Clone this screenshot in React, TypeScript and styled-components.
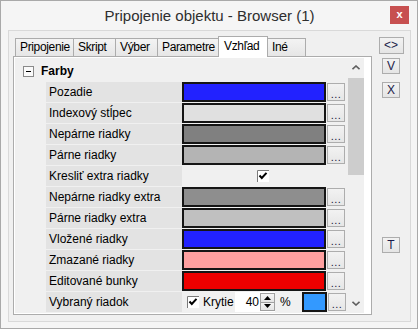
import styled, { createGlobalStyle } from 'styled-components'

const GlobalStyle = createGlobalStyle`
  html, body { margin: 0; padding: 0; background: #ffffff; }
  body {
    font-family: "Liberation Sans", Arial, sans-serif;
    font-size: 12px;
    color: #000;
  }
  * { box-sizing: border-box; }
`

type ColorRow = { name: string; color: string }

const topRows: ColorRow[] = [
  { name: 'Pozadie', color: '#2222ff' },
  { name: 'Indexový stĺpec', color: '#e0e0e0' },
  { name: 'Nepárne riadky', color: '#808080' },
  { name: 'Párne riadky', color: '#b4b4b4' },
]

const bottomRows: ColorRow[] = [
  { name: 'Nepárne riadky extra', color: '#8e8e8e' },
  { name: 'Párne riadky extra', color: '#c0c0c0' },
  { name: 'Vložené riadky', color: '#2222ff' },
  { name: 'Zmazané riadky', color: '#ffa0a0' },
  { name: 'Editované bunky', color: '#ee0000' },
]

const tabs = [
  { label: 'Pripojenie', width: 59 },
  { label: 'Skript', width: 43 },
  { label: 'Výber', width: 43 },
  { label: 'Parametre', width: 62 },
  { label: 'Vzhľad', width: 50, active: true },
  { label: 'Iné', width: 39 },
]

function Check() {
  return (
    <CheckBox>
      <svg width="12" height="12" viewBox="0 0 12 12">
        <rect x="0" y="0" width="12" height="12" fill="#fff" />
        <path d="M0.5 12 V0.5 H12" stroke="#7a7a7a" fill="none" />
        <path d="M2.5 5.5 L4.8 8 L9.5 2.8" stroke="#000" strokeWidth="2" fill="none" />
      </svg>
    </CheckBox>
  )
}

function Chevron({ down }: { down?: boolean }) {
  return (
    <svg width="8" height="5" viewBox="0 0 8 5">
      <path
        d={down ? 'M0.5 0.8 L4 4 L7.5 0.8' : 'M0.5 4.2 L4 1 L7.5 4.2'}
        stroke="#5f5f5f"
        strokeWidth="1.6"
        fill="none"
      />
    </svg>
  )
}

function DotsButton() {
  return <Dots>...</Dots>
}

export default function App() {
  return (
    <>
      <GlobalStyle />
      <Window>
        <TitleBar>
          <span />
          <Title>Pripojenie objektu - Browser (1)</Title>
          <Close>x</Close>
        </TitleBar>
        <Client>
          <TabArea>
            <TabStrip>
              {tabs.map((t) => (
                <Tab key={t.label} $width={t.width} $active={!!t.active}>
                  {t.label}
                </Tab>
              ))}
            </TabStrip>
            <Panel>
              <Grid>
                <GridBody>
                  <Header>
                    <Minus />
                    Farby
                  </Header>
                  {topRows.map((r) => (
                    <Row key={r.name}>
                      <Name>{r.name}</Name>
                      <Value>
                        <Swatch $color={r.color} />
                        <DotsButton />
                      </Value>
                    </Row>
                  ))}
                  <Row>
                    <Name>Kresliť extra riadky</Name>
                    <CenterValue>
                      <Check />
                    </CenterValue>
                  </Row>
                  {bottomRows.map((r) => (
                    <Row key={r.name}>
                      <Name>{r.name}</Name>
                      <Value>
                        <Swatch $color={r.color} />
                        <DotsButton />
                      </Value>
                    </Row>
                  ))}
                  <Row>
                    <Name>Vybraný riadok</Name>
                    <Value>
                      <Cover>
                        <Check />
                        <span>Krytie</span>
                      </Cover>
                      <SpinEdit>40</SpinEdit>
                      <Spinner>
                        <SpinHalf>
                          <svg width="7" height="4" viewBox="0 0 7 4"><path d="M0 4 L3.5 0 L7 4 Z" fill="#000" /></svg>
                        </SpinHalf>
                        <SpinHalf>
                          <svg width="7" height="4" viewBox="0 0 7 4"><path d="M0 0 L3.5 4 L7 0 Z" fill="#000" /></svg>
                        </SpinHalf>
                      </Spinner>
                      <Percent>%</Percent>
                      <Swatch $color="#3399ff" $width={25} />
                      <DotsButton />
                    </Value>
                  </Row>
                </GridBody>
                <ScrollBar>
                  <ScrollArrow>
                    <Chevron />
                  </ScrollArrow>
                  <Thumb />
                  <ScrollTrack />
                  <ScrollArrow>
                    <Chevron down />
                  </ScrollArrow>
                </ScrollBar>
              </Grid>
            </Panel>
          </TabArea>
          <SideButtons>
            <SideButton $w={25} $h={17}>&lt;&gt;</SideButton>
            <SideButton $mt={4}>V</SideButton>
            <SideButton $mt={8}>X</SideButton>
            <SideButton $mt={139}>T</SideButton>
          </SideButtons>
        </Client>
      </Window>
    </>
  )
}

const Window = styled.div`
  width: 418px;
  height: 329px;
  display: flex;
  flex-direction: column;
  background: #f5f5f5;
  border: 1px solid #a9a9a9;
  padding: 0 6px 6px 7px;
`
const TitleBar = styled.div`
  height: 29px;
  display: grid;
  grid-template-columns: 1fr auto 1fr;
  align-items: center;
`
const Title = styled.div`
  font-family: "Liberation Sans", Arial, sans-serif;
  font-size: 15px;
  color: #2e2e2e;
  padding-bottom: 1px;
`
const Close = styled.div`
  justify-self: end;
  align-self: start;
  margin-top: 5px;
  margin-right: 2px;
  width: 19px;
  height: 18px;
  background: #c75050;
  color: #fff;
  font-weight: bold;
  font-size: 11px;
  line-height: 17px;
  text-align: center;
`
const Client = styled.div`
  flex: 1;
  display: flex;
  background: #f0f0f0;
  border: 1px solid #d9d9d9;
`
const TabArea = styled.div`
  width: 363px;
  display: flex;
  flex-direction: column;
  padding: 5px 0 6px 4px;
`
const TabStrip = styled.div`
  height: 21px;
  display: flex;
  align-items: flex-start;
  padding-left: 2px;
  margin-bottom: -1px;
  position: relative;
  z-index: 1;
`
const Tab = styled.div<{ $width: number; $active: boolean }>`
  width: ${(p) => p.$width}px;
  height: ${(p) => (p.$active ? 21 : 18)}px;
  margin-top: ${(p) => (p.$active ? 0 : 2)}px;
  margin-left: -1px;
  &:first-child { margin-left: 0; }
  padding: ${(p) => (p.$active ? '2px 0 0 5px' : '1px 0 0 4px')};
  border: 1px solid #acacac;
  border-bottom: none;
  background: ${(p) => (p.$active ? '#ffffff' : 'linear-gradient(#f3f3f3, #e6e6e6)')};
  position: relative;
  z-index: ${(p) => (p.$active ? 2 : 0)};
  font-size: 12px;
  letter-spacing: -0.35px;
  line-height: 15px;
  white-space: nowrap;
  overflow: hidden;
  color: #000;
`
const Panel = styled.div`
  flex: 1;
  background: #ffffff;
  border: 1px solid #acacac;
  padding: 1px 7px 1px 1px;
  display: flex;
`
const Grid = styled.div`
  flex: 1;
  display: flex;
  background: #f0f0f0;
`
const GridBody = styled.div`
  flex: 1;
  display: flex;
  flex-direction: column;
  gap: 1px;
`
const Header = styled.div`
  height: 23px;
  display: flex;
  align-items: center;
  padding: 3px 0 0 8px;
  font-weight: bold;
  font-size: 12px;
`
const Minus = styled.span`
  width: 11px;
  height: 11px;
  margin-right: 7px;
  border: 1px solid #8a8a8a;
  background: #fafafa;
  position: relative;
  &::after {
    content: '';
    position: absolute;
    left: 2px;
    top: 4px;
    width: 5px;
    height: 1px;
    background: #000;
  }
`
const Row = styled.div`
  height: 20px;
  margin-left: 31px;
  display: grid;
  grid-template-columns: 136px 1fr;
`
const Name = styled.div`
  background: #e3e3e3;
  padding-left: 3px;
  line-height: 20px;
  white-space: nowrap;
`
const Value = styled.div`
  display: flex;
  align-items: stretch;
`
const CenterValue = styled.div`
  display: flex;
  align-items: center;
  justify-content: center;
  padding-right: 2px;
`
const Swatch = styled.div<{ $color: string; $width?: number }>`
  width: ${(p) => p.$width ?? 144}px;
  height: 20px;
  background: ${(p) => p.$color};
  border: 2px solid #151515;
`
const Dots = styled.div`
  width: 18px;
  height: 18px;
  margin: 1px 0 0 1px;
  border: 1px solid #adadad;
  background: linear-gradient(#f2f2f2, #e6e6e6);
  font-size: 11px;
  line-height: 8px;
  text-align: center;
  color: #202040;
  display: flex;
  align-items: flex-end;
  justify-content: center;
  padding-bottom: 2px;
  letter-spacing: 0.5px;
`
const CheckBox = styled.span`
  width: 12px;
  height: 12px;
  display: inline-flex;
`
const Cover = styled.div`
  width: 53px;
  display: flex;
  align-items: center;
  gap: 4px;
  padding-left: 5px;
  white-space: nowrap;
  font-size: 12px;
`
const SpinEdit = styled.div`
  width: 25px;
  background: #ffffff;
  text-align: right;
  line-height: 20px;
  padding-right: 1px;
`
const Spinner = styled.div`
  width: 15px;
  display: flex;
  flex-direction: column;
  background: #ffffff;
  padding: 1px 0;
`
const SpinHalf = styled.div`
  flex: 1;
  border: 1px solid #a0a0a0;
  background: linear-gradient(#f4f4f4, #e4e4e4);
  display: flex;
  align-items: center;
  justify-content: center;
  & + & { border-top: none; }
`
const Percent = styled.div`
  width: 27px;
  padding-left: 5px;
  line-height: 20px;
`
const ScrollBar = styled.div`
  width: 16px;
  display: flex;
  flex-direction: column;
  background: #f0f0f0;
  margin-left: 2px;
`
const ScrollArrow = styled.div`
  height: 19px;
  display: flex;
  align-items: center;
  justify-content: center;
`
const Thumb = styled.div`
  height: 97px;
  margin-top: 1px;
  background: #cdcdcd;
`
const ScrollTrack = styled.div`
  flex: 1;
`
const SideButtons = styled.div`
  flex: 1;
  display: flex;
  flex-direction: column;
  align-items: center;
  padding-top: 6px;
`
const SideButton = styled.div<{ $w?: number; $h?: number; $mt?: number }>`
  width: ${(p) => p.$w ?? 18}px;
  height: ${(p) => p.$h ?? 16}px;
  margin-top: ${(p) => p.$mt ?? 0}px;
  border: 1px solid #adadad;
  background: linear-gradient(#f2f2f2, #e5e5e5);
  font-size: 12px;
  line-height: 14px;
  text-align: center;
  color: #1c1c4a;
`
